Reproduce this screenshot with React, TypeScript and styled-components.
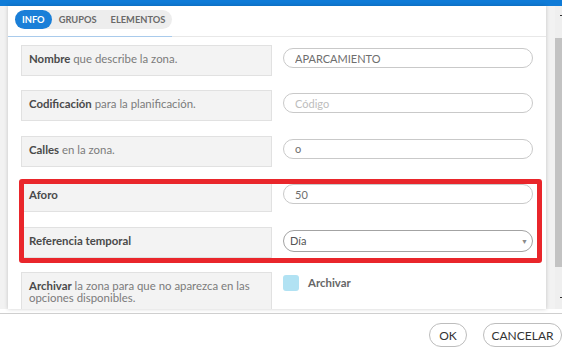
import styled, { createGlobalStyle } from "styled-components";

const GlobalStyle = createGlobalStyle`
  html, body {
    margin: 0;
    padding: 0;
    width: 562px;
    height: 352px;
    overflow: hidden;
    background: #fff;
  }
  body {
    font-family: Lato, "Open Sans", sans-serif;
  }
`;

const Screen = styled.div`
  display: flex;
  flex-direction: column;
  width: 562px;
  height: 352px;
`;

const TopBar = styled.div`
  height: 6px;
  flex: none;
  background: #0f7bd7;
`;

const Workspace = styled.div`
  display: flex;
  flex: none;
  height: 303px;
  background: #f2f2f2;
`;

const Panel = styled.div`
  margin-left: 8px;
  width: 538px;
  background: #fff;
  box-shadow: 0 0 4px rgba(0, 0, 0, 0.2);
  overflow: hidden;
`;

const Gutter = styled.div`
  width: 9px;
`;

const Scrollbar = styled.div`
  position: relative;
  width: 7px;
  background: #efefef;
`;

const Thumb = styled.div`
  margin-top: 32px;
  height: 229px;
  background: #c3c3c3;
`;

const Arrow = styled.span<{ $top: number }>`
  position: absolute;
  top: ${(p) => p.$top}px;
  right: 0;
  width: 2px;
  height: 1px;
  background: #333;
`;

const Header = styled.div`
  display: flex;
`;

const TabArea = styled.div`
  display: flex;
  width: 157px;
  padding: 4px 0 7px 7px;
  border-bottom: 1px solid #a9cbec;
`;

const HeaderRest = styled.div`
  flex: 1;
  border-bottom: 1px solid #e8e8e8;
`;

const Tabs = styled.div`
  display: flex;
  height: 19px;
  background: #ededed;
  border-radius: 10px;
`;

const Tab = styled.div<{ $active?: boolean }>`
  padding: 0 7px;
  line-height: 19px;
  font-size: 9.3px;
  font-weight: 700;
  color: ${(p) => (p.$active ? "#fff" : "#6a6a6a")};
  background: ${(p) => (p.$active ? "#1a7fd8" : "transparent")};
  border-radius: 10px;
`;

const Form = styled.div`
  display: flex;
  flex-direction: column;
  gap: 14.4px;
  padding: 8px 13px 0 13px;
`;

const Row = styled.div`
  display: grid;
  grid-template-columns: 251px 1fr;
  column-gap: 11px;
  align-items: start;
`;

const Label = styled.div`
  box-sizing: border-box;
  min-height: 31px;
  padding: 7px 7px;
  background: #f3f3f3;
  border: 1px solid #e1e1e1;
  font-size: 11.4px;
  line-height: 12.5px;
  color: #7b7b7b;

  b {
    color: #4a4a4a;
    font-weight: 700;
  }
`;

const Field = styled.input`
  box-sizing: border-box;
  width: 100%;
  height: 20px;
  margin: 3px 0 0;
  padding: 0 11px;
  border: 1px solid #c9c9c9;
  border-radius: 10px;
  font-family: inherit;
  font-size: 11px;
  color: #6e6e6e;
  outline: none;

  &::placeholder {
    color: #bdbdbd;
  }
`;

const Select = styled.div`
  box-sizing: border-box;
  display: flex;
  align-items: center;
  justify-content: space-between;
  height: 22px;
  margin-top: 3px;
  padding: 0 4px 0 6px;
  border: 1px solid #a3a3a3;
  border-radius: 11px;
  font-size: 11px;
  color: #555;
`;

const Caret = styled.span`
  font-size: 7px;
  color: #8a8a8a;
`;

const Highlight = styled.div`
  position: relative;
  display: flex;
  flex-direction: column;
  gap: 14.4px;

  &::after {
    content: "";
    position: absolute;
    top: -2px;
    bottom: -5px;
    left: -2px;
    right: -9px;
    border: 5px solid #e9262b;
    border-radius: 3px;
    pointer-events: none;
  }
`;

const Check = styled.label`
  display: flex;
  align-items: center;
  gap: 9px;
  margin-top: 3px;
  font-size: 11.4px;
  font-weight: 700;
  color: #666;
`;

const Box = styled.span`
  width: 16px;
  height: 16px;
  border-radius: 3px;
  background: #b1e2f3;
`;

const Footer = styled.div`
  display: flex;
  flex: none;
  justify-content: flex-end;
  align-items: flex-start;
  gap: 16px;
  margin-top: 4px;
  padding-top: 9px;
  height: 38px;
  border-top: 1px solid #cfcfcf;
`;

const Button = styled.button<{ $w: number }>`
  box-sizing: border-box;
  width: ${(p) => p.$w}px;
  height: 24px;
  margin: 0;
  padding: 0;
  background: #fff;
  border: 1px solid #bdbdbd;
  border-radius: 12px;
  font-family: inherit;
  font-size: 12px;
  color: #333;
`;

export default function App() {
  return (
    <Screen>
      <GlobalStyle />
      <TopBar />
      <Workspace>
        <Panel>
          <Header>
            <TabArea>
              <Tabs>
                <Tab $active>INFO</Tab>
                <Tab>GRUPOS</Tab>
                <Tab>ELEMENTOS</Tab>
              </Tabs>
            </TabArea>
            <HeaderRest />
          </Header>
          <Form>
            <Row>
              <Label>
                <b>Nombre</b> que describe la zona.
              </Label>
              <Field defaultValue="APARCAMIENTO" />
            </Row>
            <Row>
              <Label>
                <b>Codificación</b> para la planificación.
              </Label>
              <Field placeholder="Código" />
            </Row>
            <Row>
              <Label>
                <b>Calles</b> en la zona.
              </Label>
              <Field defaultValue="o" />
            </Row>
            <Highlight>
              <Row>
                <Label>
                  <b>Aforo</b>
                </Label>
                <Field defaultValue="50" />
              </Row>
              <Row>
                <Label>
                  <b>Referencia temporal</b>
                </Label>
                <Select>
                  <span>Día</span>
                  <Caret>▼</Caret>
                </Select>
              </Row>
            </Highlight>
            <Row>
              <Label>
                <b>Archivar</b> la zona para que no aparezca en las opciones
                disponibles.
              </Label>
              <Check>
                <Box />
                Archivar
              </Check>
            </Row>
          </Form>
        </Panel>
        <Gutter />
        <Scrollbar>
          <Arrow $top={9} />
          <Thumb />
          <Arrow $top={291} />
        </Scrollbar>
      </Workspace>
      <Footer>
        <Button $w={38}>OK</Button>
        <Button $w={79}>CANCELAR</Button>
      </Footer>
    </Screen>
  );
}
